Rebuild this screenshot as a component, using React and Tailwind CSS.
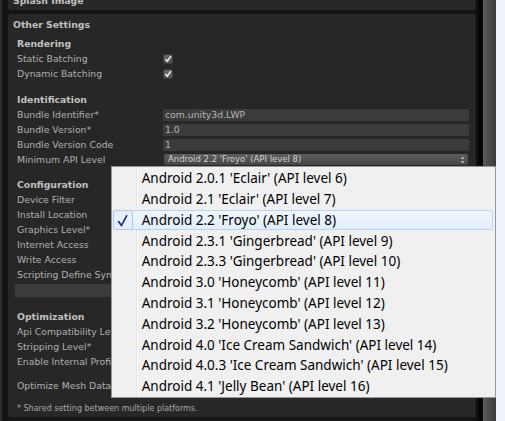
import React from "react";

const Label = ({ children }) => (
  <div className="w-[146px] shrink-0 whitespace-nowrap text-[9.3px] text-[#b1b1b1]">{children}</div>
);

const Head = ({ children, className = "" }) => (
  <div className={"flex h-[15px] items-center whitespace-nowrap text-[9.3px] font-bold text-[#c0c0c0] " + className}>
    {children}
  </div>
);

const Row = ({ label, children }) => (
  <div className="flex h-[15px] items-center">
    <Label>{label}</Label>
    {children}
  </div>
);

const Check = () => (
  <svg width="10" height="10" viewBox="0 0 10 10">
    <defs>
      <linearGradient id="cb" x1="0" y1="0" x2="0" y2="1">
        <stop offset="0" stopColor="#6a6a6a" />
        <stop offset="1" stopColor="#525252" />
      </linearGradient>
    </defs>
    <rect x="0.5" y="0.5" width="9" height="9" rx="1.5" fill="url(#cb)" stroke="#3a3a3a" />
    <path d="M2.4 5 L4.2 7.3 L7.9 2.1" stroke="#ececec" strokeWidth="1.5" fill="none" />
  </svg>
);

const Field = ({ children }) => (
  <div className="flex h-[12px] flex-1 items-center bg-[#3b3b3b] pl-[2px] text-[9.3px] text-[#b6b6b6] whitespace-nowrap">
    {children}
  </div>
);

const items = [
  "Android 2.0.1 'Eclair' (API level 6)",
  "Android 2.1 'Eclair' (API level 7)",
  "Android 2.2 'Froyo' (API level 8)",
  "Android 2.3.1 'Gingerbread' (API level 9)",
  "Android 2.3.3 'Gingerbread' (API level 10)",
  "Android 3.0 'Honeycomb' (API level 11)",
  "Android 3.1 'Honeycomb' (API level 12)",
  "Android 3.2 'Honeycomb' (API level 13)",
  "Android 4.0 'Ice Cream Sandwich' (API level 14)",
  "Android 4.0.3 'Ice Cream Sandwich' (API level 15)",
  "Android 4.1 'Jelly Bean' (API level 16)",
];

export default function App() {
  return (
    <div className="relative flex h-[421px] w-[505px] overflow-hidden bg-[#151515] font-['DejaVu_Sans',sans-serif]">
      <div className="w-[2px] bg-[#2c2c2c]" />
      <div className="w-[6px] bg-[#131313]" />
      <div className="flex w-[468px] flex-col">
        <div className="h-[10px] overflow-hidden rounded-b-[2px] bg-[#272727]">
          <div className="-mt-[7px] pl-[5px] text-[9.3px] font-bold leading-[15px] text-[#c0c0c0]">Splash Image</div>
        </div>
        <div className="h-[4px]" />
        <div className="h-[403px] rounded-[2px] bg-[#272727] pl-[9px] pr-[7px] pt-[3px]">
          <Head className="-ml-[4px]">Other Settings</Head>
          <Head className="mt-[4px]">Rendering</Head>
          <Row label="Static Batching"><Check /></Row>
          <Row label="Dynamic Batching"><Check /></Row>

          <Head className="mt-[11px]">Identification</Head>
          <Row label="Bundle Identifier*"><Field>com.unity3d.LWP</Field></Row>
          <Row label="Bundle Version*"><Field>1.0</Field></Row>
          <Row label="Bundle Version Code"><Field>1</Field></Row>
          <Row label="Minimum API Level">
            <div className="relative flex h-[13px] flex-1 items-center rounded-[3px] border border-[#252525] bg-gradient-to-b from-[#5e5e5e] to-[#454545] pl-[4px] text-[8.5px] text-[#d2d2d2] whitespace-nowrap">
              Android 2.2 'Froyo' (API level 8)
              <svg className="absolute right-[3px] top-[2px]" width="5" height="8" viewBox="0 0 5 8">
                <path d="M2.5 0.5 L4.3 3 L0.7 3 Z M2.5 7.5 L4.3 5 L0.7 5 Z" fill="#bdbdbd" />
              </svg>
            </div>
          </Row>

          <Head className="mt-[10px]">Configuration</Head>
          <Row label="Device Filter" />
          <Row label="Install Location" />
          <Row label="Graphics Level*" />
          <Row label="Internet Access" />
          <Row label="Write Access" />
          <Row label="Scripting Define Symbols" />
          <div className="-ml-[2px] mt-[2px] h-[13px] bg-[#3b3b3b]" />

          <Head className="mt-[12px]">Optimization</Head>
          <Row label="Api Compatibility Level" />
          <Row label="Stripping Level*" />
          <Row label="Enable Internal Profiler" />
          <div className="mt-[9px]">
            <Row label="Optimize Mesh Data" />
          </div>
          <div className="mt-[10px] flex h-[12px] items-center whitespace-nowrap text-[8px] text-[#a8a8a8]">
            * Shared setting between multiple platforms.
          </div>
        </div>
      </div>
      <div className="w-[3px] bg-[#0e0e0e]" />
      <div className="w-[4px] bg-[#050505]" />
      <div className="w-[13px] bg-gradient-to-r from-[#5c5c5c] via-[#4a4a4a] to-[#3a3a3a]" />
      <div className="flex-1 bg-[#eef2f9]" />

      <div className="absolute left-[111px] top-[166px] h-[232px] w-[385px] border border-[#979797] bg-[#f0f0f0] py-px font-['Noto_Sans',sans-serif] text-[13.5px] text-black">
        <div className="absolute bottom-0 left-[24px] top-0 w-px bg-[#e2e3e3]" />
        <div className="absolute bottom-0 left-[25px] top-0 w-px bg-white" />
        {items.map((t, i) => (
          <div key={i} className="relative flex h-[20.8px] items-center whitespace-nowrap pl-[29.7px]">
            {i === 2 && (
              <>
                <div className="absolute bottom-0 left-[1px] right-[2px] top-0 rounded-[3px] border border-[#b6d4f4] bg-gradient-to-b from-[#f0f6fe] to-[#e3eefb]" />
                <div className="absolute bottom-0 left-[1px] top-0 w-[20px] rounded-[3px] border border-[#a9caef] bg-[#e6f0fc]">
                  <svg className="absolute left-0 top-0" width="20" height="20" viewBox="0 0 20 20">
                    <path d="M4.6 10.6 L7.4 14.6 L12.6 4.8" stroke="#1f2c8f" strokeWidth="1.7" fill="none" strokeLinecap="round" strokeLinejoin="round" />
                  </svg>
                </div>
              </>
            )}
            <span className="relative">{t}</span>
          </div>
        ))}
      </div>
    </div>
  );
}
